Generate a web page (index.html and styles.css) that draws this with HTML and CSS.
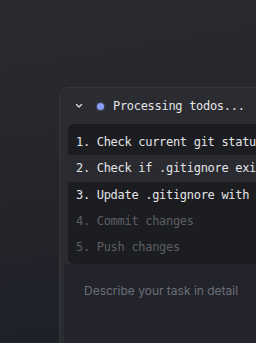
FILE: index.html
```html
<!DOCTYPE html>
<html lang="en">
<head>
    <meta charset="UTF-8">
    <meta name="viewport" content="width=device-width, initial-scale=1.0">
    <title>Processing todos</title>
    <link rel="stylesheet" href="styles.css">
</head>
<body>
    <div class="stage">
        <div class="panel">
            <div class="panel-head">
                <svg class="chevron" width="8" height="6" viewBox="0 0 8 6">
                    <path d="M1.5 1.5 L4 4 L6.5 1.5" fill="none" stroke="#d6d7db" stroke-width="1.4" stroke-linecap="round" stroke-linejoin="round"/>
                </svg>
                <span class="status-dot"></span>
                <span class="title">Processing todos...</span>
            </div>
            <ol class="todo-list">
                <li class="todo">1. Check current git status</li>
                <li class="todo active">2. Check if .gitignore exists</li>
                <li class="todo">3. Update .gitignore with entries</li>
                <li class="todo pending">4. Commit changes</li>
                <li class="todo pending">5. Push changes</li>
            </ol>
            <div class="composer">
                <div class="placeholder">Describe your task in detail</div>
            </div>
        </div>
    </div>
</body>
</html>
```

FILE: styles.css
```css
:root {
    --bg-top: #2a2b2f;
    --bg-bottom: #1d1f27;
    --panel: #2b2c31;
    --list: #1c1d21;
    --row-active: #2a2b30;
    --text: #e4e4e7;
    --muted: #5c5d63;
    --accent: #8b9cf7;
}

* {
    margin: 0;
    padding: 0;
    box-sizing: border-box;
}

body {
    width: 256px;
    height: 343px;
    overflow: hidden;
    background: linear-gradient(170deg, var(--bg-top) 0%, #25262b 45%, var(--bg-bottom) 100%);
    font-family: 'DejaVu Sans Mono', 'Liberation Mono', monospace;
}

.stage {
    width: 256px;
    height: 343px;
    overflow: hidden;
    padding: 87px 0 0 59px;
}

.panel {
    width: 197px;
    height: 256px;
    overflow: hidden;
    background-color: var(--panel);
    border-top: 1px solid #35363b;
    border-left: 1px solid #35363b;
    border-radius: 10px 0 0 0;
    padding: 0 0 0 4px;
}

.panel-head {
    display: flex;
    align-items: center;
    height: 36px;
    padding-left: 11px;
}

.chevron {
    margin-right: 14px;
}

.status-dot {
    width: 7px;
    height: 7px;
    border-radius: 50%;
    background-color: var(--accent);
    box-shadow: 0 0 3px rgba(139, 156, 247, 0.5);
    margin-right: 9px;
}

.title {
    color: var(--text);
    font-size: 12px;
    letter-spacing: -0.3px;
    white-space: nowrap;
}

.todo-list {
    list-style: none;
    margin-left: 4px;
    background-color: var(--list);
    border-radius: 6px 0 0 6px;
    padding: 5px 0 4px;
}

.todo {
    height: 26.3px;
    display: flex;
    align-items: center;
    padding-left: 8px;
    color: var(--text);
    font-size: 12px;
    letter-spacing: -0.3px;
    white-space: nowrap;
}

.todo.active {
    background-color: var(--row-active);
}

.todo.pending {
    color: var(--muted);
}

.composer {
    height: 90px;
    background-color: #23242b;
    padding: 19px 0 0 20px;
}

.placeholder {
    font-family: 'Inter', 'Noto Sans', sans-serif;
    font-size: 12px;
    color: #6c6e76;
    white-space: nowrap;
}
```
